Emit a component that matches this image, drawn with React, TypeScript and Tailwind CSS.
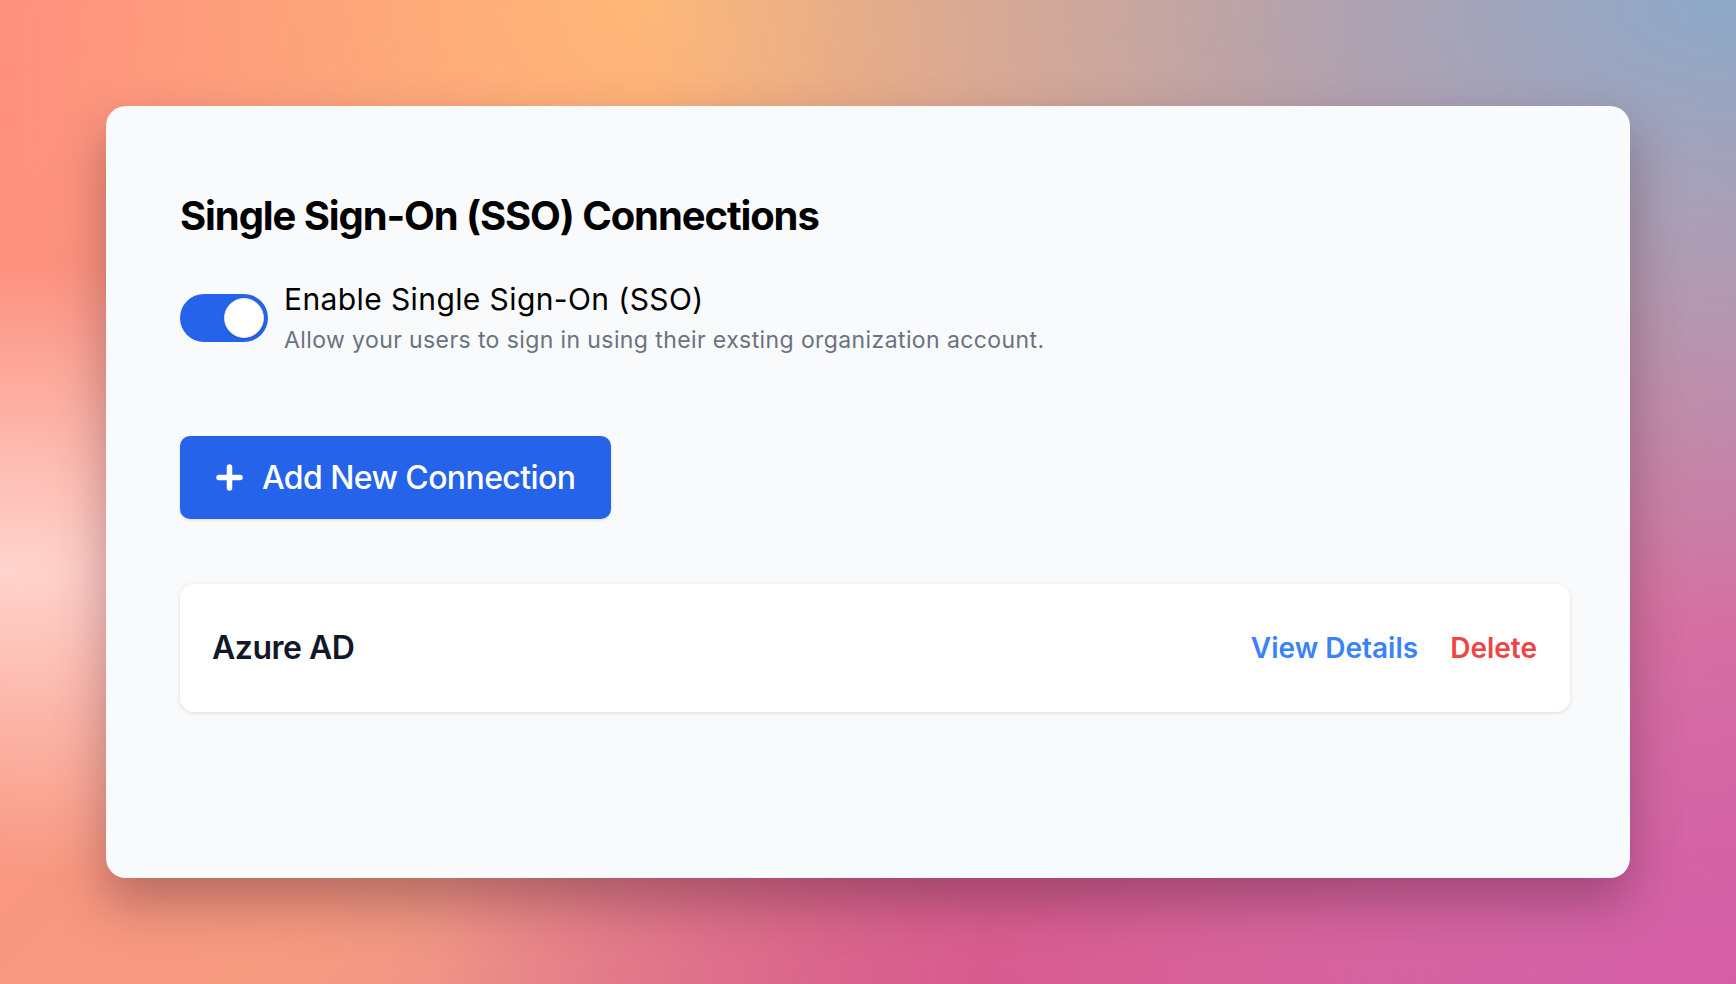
import React from "react";

export default function App() {
  return (
    <div
      className="min-h-screen w-full p-[106px] font-['Inter','Noto_Sans',sans-serif] bg-[image:radial-gradient(ellipse_at_0%_58%,#ffd3cd_0%,rgba(255,211,205,0)_38%),radial-gradient(ellipse_at_100%_0%,#8ca9c9_0%,rgba(140,169,201,0)_45%),radial-gradient(ellipse_at_38%_0%,#ffb877_0%,rgba(255,184,119,0)_45%),radial-gradient(ellipse_at_100%_100%,#d65ea6_0%,rgba(214,94,166,0)_55%),radial-gradient(ellipse_at_58%_100%,#d8587a_0%,rgba(216,88,122,0)_40%),linear-gradient(135deg,#ff8d7f_0%,#f69a80_45%,#c87aa6_100%)]"
    >
      <div className="h-[772px] w-[1524px] rounded-[20px] bg-[#f8fafc] pl-[74px] pr-[60px] pt-[82px] shadow-[0_24px_50px_rgba(60,20,40,0.35)]">
        <h2 className="text-[40px] leading-[56px] font-bold text-black tracking-[-1.1px]">
          Single Sign-On (SSO) Connections
        </h2>

        <div className="mt-[35px] flex items-center gap-[16px]">
          <button
            type="button"
            className="relative h-[48px] w-[88px] shrink-0 rounded-full bg-[#2563eb]"
            aria-pressed="true"
          >
            <span className="absolute left-[44px] top-[4px] h-[40px] w-[40px] rounded-full border border-[#e5e7eb] bg-white shadow-[0_1px_2px_rgba(0,0,0,0.15)]" />
          </button>
          <div className="flex flex-col">
            <span className="text-[30px] leading-[40px] tracking-[0.4px] text-black">
              Enable Single Sign-On (SSO)
            </span>
            <span className="mt-[5px] text-[23px] leading-[32px] tracking-[0.4px] text-[#6b7280]">
              Allow your users to sign in using their exsting organization account.
            </span>
          </div>
        </div>

        <button
          type="button"
          className="mt-[80px] flex h-[83px] items-center gap-[19px] rounded-[10px] bg-[#2563eb] pl-[36px] pr-[36px] text-[32px] font-medium tracking-[-0.6px] text-white shadow-[0_1px_3px_rgba(0,0,0,0.12)]"
        >
          <svg width="27" height="27" viewBox="0 0 27 27" fill="none">
            <path
              d="M13.5 3v21M3 13.5h21"
              stroke="white"
              strokeWidth="5.5"
              strokeLinecap="round"
            />
          </svg>
          <span>Add New Connection</span>
        </button>

        <div className="mt-[65px] flex h-[128px] w-full items-center justify-between rounded-[14px] bg-white pl-[32px] pr-[33px] shadow-[0_1px_4px_rgba(0,0,0,0.12)]">
          <span className="text-[32px] font-semibold tracking-[-0.5px] text-[#111827]">Azure AD</span>
          <div className="flex items-center gap-[32px]">
            <a className="cursor-pointer text-[28px] font-semibold text-[#3b82f6]">
              View Details
            </a>
            <a className="cursor-pointer text-[28px] font-semibold text-[#ef4444]">
              Delete
            </a>
          </div>
        </div>
      </div>
    </div>
  );
}
